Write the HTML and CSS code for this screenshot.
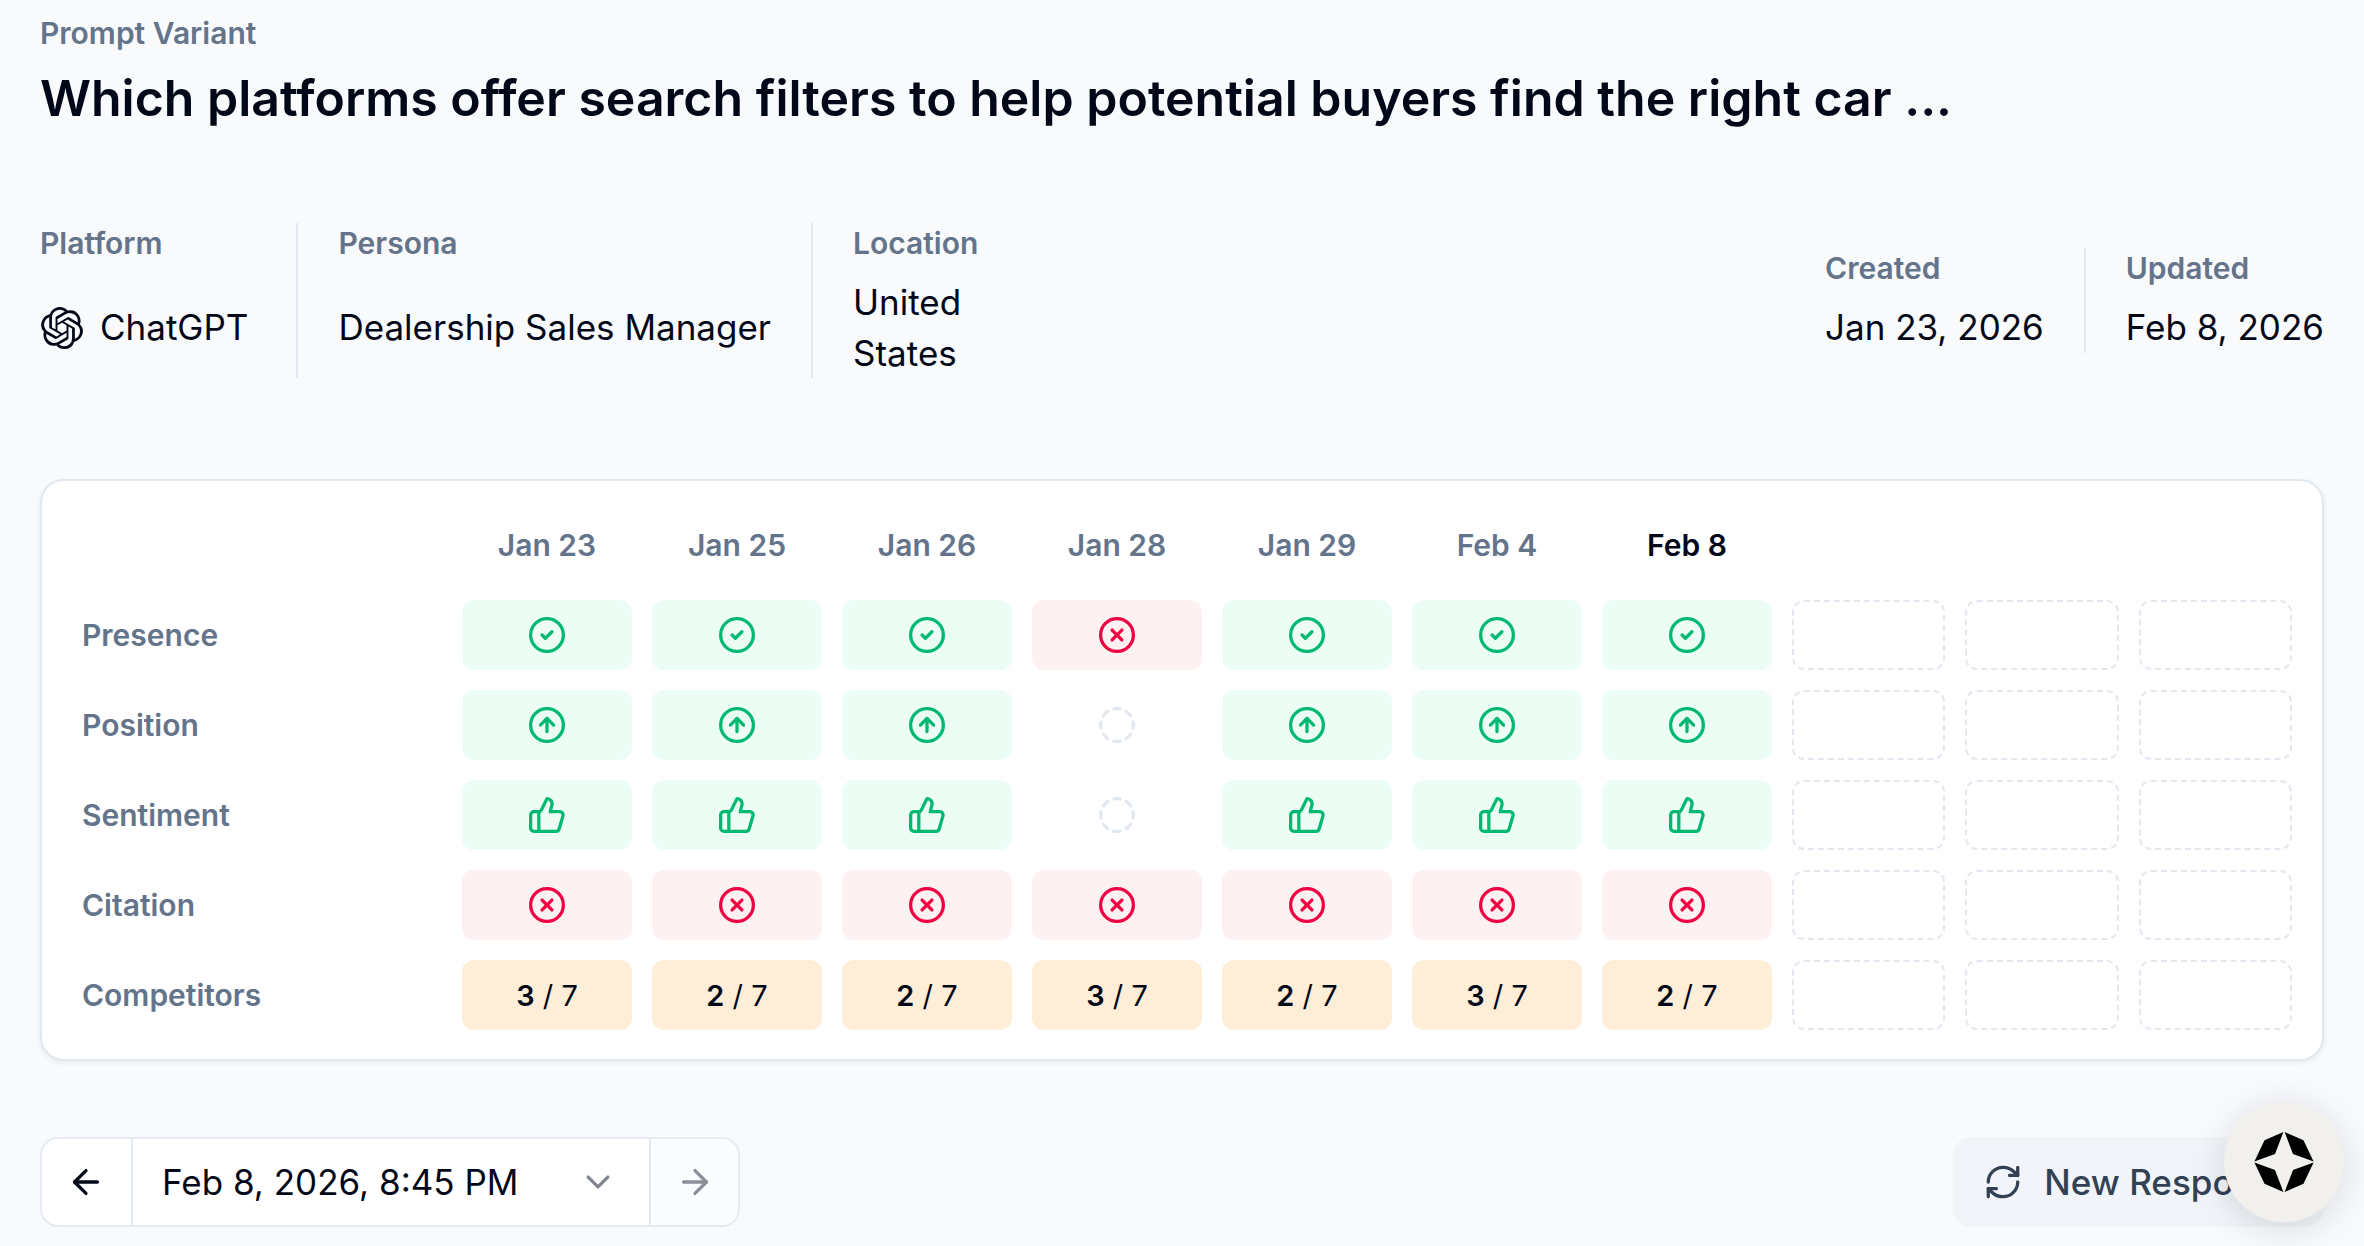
FILE: index.html
```html
<!DOCTYPE html>
<html lang="en">
  <head>
    <meta charset="UTF-8" />
    <meta name="viewport" content="width=device-width, initial-scale=1.0" />
    <title>Prompt Variant</title>
    <link rel="stylesheet" href="styles.css">
  </head>
  <body>
    <svg class="sprites" xmlns="http://www.w3.org/2000/svg">
      <symbol id="i-check" viewBox="1 1 22 22"><circle cx="12" cy="12" r="10"/><path d="m9 12 2 2 4-4"/></symbol>
      <symbol id="i-up" viewBox="1 1 22 22"><circle cx="12" cy="12" r="10"/><path d="m16 12-4-4-4 4"/><path d="M12 16V8"/></symbol>
      <symbol id="i-thumb" viewBox="1 1 22 22"><path d="M7 10v12"/><path d="M15 5.88 14 10h5.83a2 2 0 0 1 1.92 2.56l-2.33 8A2 2 0 0 1 17.5 22H4a2 2 0 0 1-2-2v-8a2 2 0 0 1 2-2h2.76a2 2 0 0 0 1.79-1.11L12 2a3.13 3.13 0 0 1 3 3.88Z"/></symbol>
      <symbol id="i-x" viewBox="1 1 22 22"><circle cx="12" cy="12" r="10"/><path d="m15 9-6 6"/><path d="m9 9 6 6"/></symbol>
      <symbol id="i-none" viewBox="1 1 22 22"><path d="M10.1 2.182a10 10 0 0 1 3.8 0"/><path d="M13.9 21.818a10 10 0 0 1-3.8 0"/><path d="M17.609 3.721a10 10 0 0 1 2.69 2.7"/><path d="M2.182 13.9a10 10 0 0 1 0-3.8"/><path d="M20.279 17.609a10 10 0 0 1-2.7 2.69"/><path d="M21.818 10.1a10 10 0 0 1 0 3.8"/><path d="M3.721 6.391a10 10 0 0 1 2.7-2.69"/><path d="M6.391 20.279a10 10 0 0 1-2.69-2.7"/></symbol>
    </svg>

    <main>
      <div class="label">Prompt Variant</div>
      <h1>Which platforms offer search filters to help potential buyers find the right car ...</h1>

      <section class="meta">
        <div class="meta-group">
          <div class="meta-item meta-platform">
            <div class="label">Platform</div>
            <div class="value value-icon">
              <svg class="logo" viewBox="0 0 24 24" xmlns="http://www.w3.org/2000/svg"><path d="M22.2819 9.8211a5.9847 5.9847 0 0 0-.5157-4.9108 6.0462 6.0462 0 0 0-6.5098-2.9A6.0651 6.0651 0 0 0 4.9807 4.1818a5.9847 5.9847 0 0 0-3.9977 2.9 6.0462 6.0462 0 0 0 .7427 7.0966 5.98 5.98 0 0 0 .511 4.9107 6.051 6.051 0 0 0 6.5146 2.9001A5.9847 5.9847 0 0 0 13.2599 24a6.0557 6.0557 0 0 0 5.7718-4.2058 5.9894 5.9894 0 0 0 3.9977-2.9001 6.0557 6.0557 0 0 0-.7475-7.0729zm-9.022 12.6081a4.4755 4.4755 0 0 1-2.8764-1.0408l.1419-.0804 4.7783-2.7582a.7948.7948 0 0 0 .3927-.6813v-6.7369l2.02 1.1686a.071.071 0 0 1 .038.052v5.5826a4.504 4.504 0 0 1-4.4945 4.4944zm-9.6607-4.1254a4.4708 4.4708 0 0 1-.5346-3.0137l.142.0852 4.783 2.7582a.7712.7712 0 0 0 .7806 0l5.8428-3.3685v2.3324a.0804.0804 0 0 1-.0332.0615L9.74 19.9502a4.4992 4.4992 0 0 1-6.1408-1.6464zM2.3408 7.8956a4.485 4.485 0 0 1 2.3655-1.9728V11.6a.7664.7664 0 0 0 .3879.6765l5.8144 3.3543-2.0201 1.1685a.0757.0757 0 0 1-.071 0l-4.8303-2.7865A4.504 4.504 0 0 1 2.3408 7.872zm16.5963 3.8558L13.1038 8.364 15.1192 7.2a.0757.0757 0 0 1 .071 0l4.8303 2.7913a4.4944 4.4944 0 0 1-.6765 8.1042v-5.6772a.79.79 0 0 0-.407-.667zm2.0107-3.0231l-.142-.0852-4.7735-2.7818a.7759.7759 0 0 0-.7854 0L9.409 9.2297V6.8974a.0662.0662 0 0 1 .0284-.0615l4.8303-2.7866a4.4992 4.4992 0 0 1 6.6802 4.66zM8.3065 12.863l-2.02-1.1638a.0804.0804 0 0 1-.038-.0567V6.0742a4.4992 4.4992 0 0 1 7.3757-3.4537l-.142.0805L8.704 5.459a.7948.7948 0 0 0-.3927.6813zm1.0976-2.3654l2.602-1.4998 2.6069 1.4998v2.9994l-2.5974 1.4997-2.6067-1.4997Z"/></svg>
              ChatGPT
            </div>
          </div>
          <div class="meta-item">
            <div class="label">Persona</div>
            <div class="value value-icon">Dealership Sales Manager</div>
          </div>
          <div class="meta-item meta-location">
            <div class="label">Location</div>
            <div class="value">United States</div>
          </div>
        </div>
        <div class="meta-group">
          <div class="meta-item">
            <div class="label">Created</div>
            <div class="value">Jan 23, 2026</div>
          </div>
          <div class="meta-item">
            <div class="label">Updated</div>
            <div class="value">Feb 8, 2026</div>
          </div>
        </div>
      </section>

      <section class="card">
        <div class="grid">
          <div></div>
          <div class="day">Jan 23</div>
          <div class="day">Jan 25</div>
          <div class="day">Jan 26</div>
          <div class="day">Jan 28</div>
          <div class="day">Jan 29</div>
          <div class="day">Feb 4</div>
          <div class="day day-current">Feb 8</div>
          <div></div>
          <div></div>
          <div></div>

          <div class="row-name">Presence</div>
          <div class="cell good"><svg class="icon"><use href="#i-check"/></svg></div>
          <div class="cell good"><svg class="icon"><use href="#i-check"/></svg></div>
          <div class="cell good"><svg class="icon"><use href="#i-check"/></svg></div>
          <div class="cell bad"><svg class="icon"><use href="#i-x"/></svg></div>
          <div class="cell good"><svg class="icon"><use href="#i-check"/></svg></div>
          <div class="cell good"><svg class="icon"><use href="#i-check"/></svg></div>
          <div class="cell good"><svg class="icon"><use href="#i-check"/></svg></div>
          <div class="cell empty"></div>
          <div class="cell empty"></div>
          <div class="cell empty"></div>

          <div class="row-name">Position</div>
          <div class="cell good"><svg class="icon"><use href="#i-up"/></svg></div>
          <div class="cell good"><svg class="icon"><use href="#i-up"/></svg></div>
          <div class="cell good"><svg class="icon"><use href="#i-up"/></svg></div>
          <div class="cell none"><svg class="icon"><use href="#i-none"/></svg></div>
          <div class="cell good"><svg class="icon"><use href="#i-up"/></svg></div>
          <div class="cell good"><svg class="icon"><use href="#i-up"/></svg></div>
          <div class="cell good"><svg class="icon"><use href="#i-up"/></svg></div>
          <div class="cell empty"></div>
          <div class="cell empty"></div>
          <div class="cell empty"></div>

          <div class="row-name">Sentiment</div>
          <div class="cell good"><svg class="icon"><use href="#i-thumb"/></svg></div>
          <div class="cell good"><svg class="icon"><use href="#i-thumb"/></svg></div>
          <div class="cell good"><svg class="icon"><use href="#i-thumb"/></svg></div>
          <div class="cell none"><svg class="icon"><use href="#i-none"/></svg></div>
          <div class="cell good"><svg class="icon"><use href="#i-thumb"/></svg></div>
          <div class="cell good"><svg class="icon"><use href="#i-thumb"/></svg></div>
          <div class="cell good"><svg class="icon"><use href="#i-thumb"/></svg></div>
          <div class="cell empty"></div>
          <div class="cell empty"></div>
          <div class="cell empty"></div>

          <div class="row-name">Citation</div>
          <div class="cell bad"><svg class="icon"><use href="#i-x"/></svg></div>
          <div class="cell bad"><svg class="icon"><use href="#i-x"/></svg></div>
          <div class="cell bad"><svg class="icon"><use href="#i-x"/></svg></div>
          <div class="cell bad"><svg class="icon"><use href="#i-x"/></svg></div>
          <div class="cell bad"><svg class="icon"><use href="#i-x"/></svg></div>
          <div class="cell bad"><svg class="icon"><use href="#i-x"/></svg></div>
          <div class="cell bad"><svg class="icon"><use href="#i-x"/></svg></div>
          <div class="cell empty"></div>
          <div class="cell empty"></div>
          <div class="cell empty"></div>

          <div class="row-name">Competitors</div>
          <div class="cell count"><b>3</b>&nbsp;/ 7</div>
          <div class="cell count"><b>2</b>&nbsp;/ 7</div>
          <div class="cell count"><b>2</b>&nbsp;/ 7</div>
          <div class="cell count"><b>3</b>&nbsp;/ 7</div>
          <div class="cell count"><b>2</b>&nbsp;/ 7</div>
          <div class="cell count"><b>3</b>&nbsp;/ 7</div>
          <div class="cell count"><b>2</b>&nbsp;/ 7</div>
          <div class="cell empty"></div>
          <div class="cell empty"></div>
          <div class="cell empty"></div>
        </div>
      </section>

      <section class="toolbar">
        <div class="pager">
          <button class="pager-btn pager-prev">
            <svg class="tool-icon" viewBox="1 1 22 22"><path d="m12 19-7-7 7-7"/><path d="M19 12H5"/></svg>
          </button>
          <button class="pager-select">
            Feb 8, 2026, 8:45 PM
            <svg class="tool-icon chevron" viewBox="1 1 22 22"><path d="m6 9 6 6 6-6"/></svg>
          </button>
          <button class="pager-btn pager-next">
            <svg class="tool-icon" viewBox="1 1 22 22"><path d="M5 12h14"/><path d="m12 5 7 7-7 7"/></svg>
          </button>
        </div>
        <button class="new-response">
          <svg class="tool-icon" viewBox="1 1 22 22"><path d="M3 12a9 9 0 0 1 9-9 9.75 9.75 0 0 1 6.74 2.74L21 8"/><path d="M21 3v5h-5"/><path d="M21 12a9 9 0 0 1-9 9 9.75 9.75 0 0 1-6.74-2.74L3 16"/><path d="M8 16H3v5"/></svg>
          New Response
        </button>
      </section>
    </main>

    <button class="assistant">
      <svg viewBox="-30 -30 60 60" class="assistant-mark"><path d="M.6-30 19.5-21.7 29.6-.6 9-8Z"/><path d="M29.6.6 19.5 21.7.6 30 9 8Z"/><path d="M-.6 30-19.5 21.7-29.6.6-9 8Z"/><path d="M-29.6-.6-19.5-21.7-.6-30-9-8Z"/></svg>
    </button>
  </body>
</html>
```

FILE: styles.css
```css
* { box-sizing: border-box; }
html, body { margin: 0; height: 100%; overflow: hidden; }
body { background-color: #f9fafc; color: #020817; font-family: Inter, "Noto Sans", sans-serif; }
button { font-family: inherit; border: 0; padding: 0; background: none; color: inherit; }
.sprites { display: none; }

main { padding: 13px 40px 0; }
h1 { margin: 10px 0 0; font-size: 50px; line-height: 70px; font-weight: 600; white-space: nowrap; }
.label { font-size: 30px; line-height: 40px; font-weight: 600; color: #64748b; }

.meta { display: flex; align-items: center; justify-content: space-between; margin-top: 90px; }
.meta-group { display: flex; }
.meta-item { display: flex; flex-direction: column; gap: 14px; padding: 0 40px; border-left: 2px solid #e2e8f0; }
.meta-item:first-child { padding-left: 0; border-left: 0; }
.meta-item:last-child { padding-right: 0; }
.meta-platform { padding-right: 48px; }
.meta-location { width: 200px; }
.value { font-size: 35px; line-height: 50.5px; }
.value-icon { display: flex; flex: 1; align-items: center; }
.logo { width: 42px; height: 42px; margin: 1px 17px 0 1px; fill: #020817; }

.card { margin-top: 101px; padding: 29px 30px 29px 40px; background-color: #fff; border: 2px solid #e2e8f0; border-radius: 24px; box-shadow: 0 2px 5px rgba(15, 23, 42, 0.07); }
.grid { display: grid; grid-template-columns: 360px repeat(7, 170px) repeat(3, 1fr); grid-auto-rows: 70px; gap: 20px; }
.day { display: flex; align-items: center; justify-content: center; font-size: 30px; font-weight: 600; color: #64748b; }
.day-current { color: #020817; }
.row-name { display: flex; align-items: center; font-size: 30px; font-weight: 600; color: #64748b; }

.cell { display: flex; align-items: center; justify-content: center; border-radius: 12px; }
.icon { width: 36px; height: 36px; fill: none; stroke: currentColor; stroke-width: 2; stroke-linecap: round; stroke-linejoin: round; }
.good { background-color: #ecfdf5; color: #00b971; }
.bad { background-color: #fef1f2; color: #ef0040; }
.none { color: #e2e8f0; }
.count { background-color: #ffeed7; font-size: 29px; }
.count b { font-weight: 600; }
.empty { border: 2px dashed #e2e8f0; }

.toolbar { display: flex; align-items: center; justify-content: space-between; margin-top: 76px; }
.pager { display: flex; height: 90px; background-color: #fff; border: 2px solid #e6ebf2; border-radius: 18px; overflow: hidden; }
.pager-btn { display: flex; align-items: center; justify-content: center; width: 89px; }
.pager-prev { padding-right: 2px; }
.pager-next { width: 87px; color: #8a8f99; background-color: #fbfcfd; }
.pager-select { display: flex; align-items: center; justify-content: space-between; width: 520px; padding: 0 33px 0 29px; font-size: 35px; border-left: 2px solid #e2e8f0; border-right: 2px solid #e2e8f0; }
.tool-icon { width: 36px; height: 36px; fill: none; stroke: currentColor; stroke-width: 2; stroke-linecap: round; stroke-linejoin: round; }
.chevron { stroke: #80858f; }
.new-response { display: flex; align-items: center; gap: 23px; height: 90px; padding: 0 30px 0 32px; font-size: 35px; font-weight: 500; color: #334155; background-color: #f1f5f9; border-radius: 18px; }

.assistant { position: fixed; right: 20px; bottom: 24px; display: flex; align-items: center; justify-content: center; width: 120px; height: 120px; background-color: #f1f0ec; border-radius: 50%; box-shadow: 0 6px 36px rgba(15, 23, 42, 0.14); }
.assistant-mark { width: 60px; height: 60px; fill: #000; }
```
